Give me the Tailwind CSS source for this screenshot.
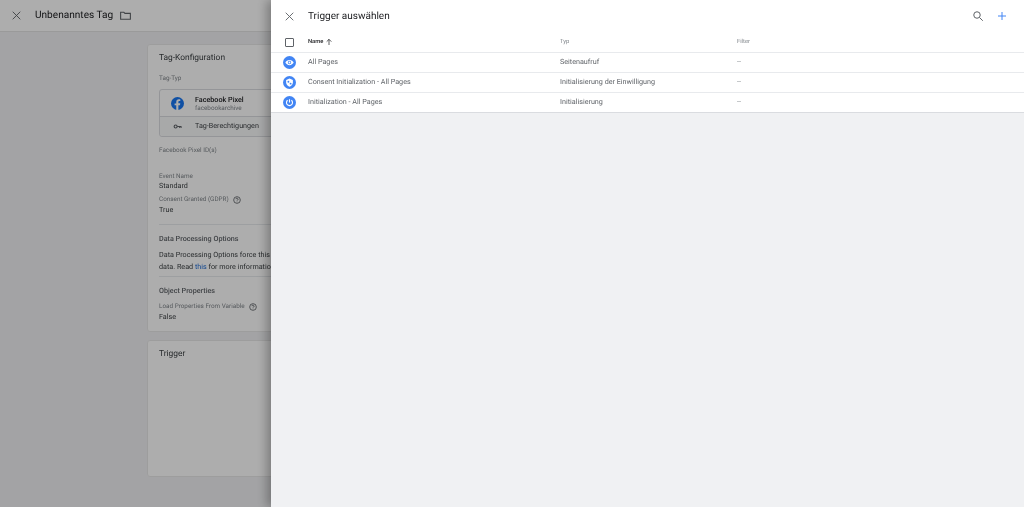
<!DOCTYPE html>
<html>
<head>
<meta charset="utf-8">
<title>Trigger auswählen</title>
<script src="https://cdn.jsdelivr.net/npm/@tailwindcss/browser@4"></script>
</head>
<body class="font-['Roboto',sans-serif] [text-rendering:geometricPrecision] bg-[#f0f1f3] text-[#3c4043] overflow-hidden">
<div class="relative w-[1024px] h-[507px] overflow-hidden blur-[0.35px] [will-change:transform]">

  <!-- page under the panel -->
  <div class="h-full flex flex-col">
    <header class="h-[32px] shrink-0 bg-white border-b border-[#e3e3e3] flex items-center">
      <svg class="w-[13px] h-[13px] ml-[10px] text-[#5f6368]" viewBox="0 0 24 24" fill="none" stroke="currentColor" stroke-width="1.700"><path d="M5 5l14 14M19 5L5 19"/></svg>
      <h1 class="ml-[12px] pt-[1px] text-[10.100px] leading-[14px] text-[#202124]">Unbenanntes Tag</h1>
      <svg class="w-[13px] h-[13px] ml-[6px] text-[#5f6368]" viewBox="0 0 24 24" fill="none" stroke="currentColor" stroke-width="2"><path d="M3 6h6l2 2h10v11H3z"/></svg>
    </header>
    <main class="flex-1 pl-[147px] pt-[12px] w-[560px]">
      <section class="h-[288px] bg-white rounded-[3px] border border-[#e8e8e8] pl-[11px] pt-[7px] flex flex-col">
        <h2 class="text-[8.400px] leading-[12px]">Tag-Konfiguration</h2>
        <p class="mt-[10px] text-[6.350px] leading-[9px] text-[#80868b]">Tag-Typ</p>
        <div class="mt-[6px] mr-[10px] h-[48px] border border-[#dadce0] rounded-[3px] flex flex-col">
          <div class="h-[27px] border-b border-[#dadce0] flex items-center">
            <svg class="w-[13px] h-[13px] ml-[11px]" viewBox="0 0 24 24"><circle cx="12" cy="12" r="12" fill="#1877f2"/><path fill="#fff" d="M13.600 24v-9h3l.5-3.500h-3.500V9.300c0-1 .5-1.900 2-1.900h1.600V4.400s-1.400-.3-2.800-.3c-2.800 0-4.700 1.700-4.700 4.900v2.900H6.600V15h3.100v9z"/></svg>
            <div class="ml-[11px]">
              <div class="text-[7.200px] leading-[9px] font-medium text-[#202124]">Facebook Pixel</div>
              <div class="text-[6.350px] leading-[8px] text-[#80868b]">facebookarchive</div>
            </div>
          </div>
          <div class="flex-1 bg-[#f8f9fa] flex items-center rounded-b-[3px]">
            <svg class="w-[9px] h-[9px] ml-[13px] text-[#5f6368]" viewBox="0 0 24 24" fill="none" stroke="currentColor" stroke-width="3"><circle cx="7" cy="12" r="4"/><path d="M11 12h11M18 12v4M22 12v3"/></svg>
            <span class="ml-[13px] text-[7.200px]">Tag-Berechtigungen</span>
          </div>
        </div>
        <p class="mt-[9px] text-[6.350px] leading-[9px] text-[#80868b]">Facebook Pixel ID(s)</p>
        <p class="mt-[17px] text-[6.350px] leading-[9px] text-[#80868b]">Event Name</p>
        <p class="text-[7.200px] leading-[10px]">Standard</p>
        <p class="mt-[4px] flex items-center gap-[4px] text-[6.350px] leading-[9px] text-[#80868b]">Consent Granted (GDPR)
          <svg class="w-[8px] h-[8px] text-[#5f6368]" viewBox="0 0 24 24" fill="none" stroke="currentColor" stroke-width="2.500"><circle cx="12" cy="12" r="10"/><path d="M9 9.500a3 3 0 1 1 4.500 2.600c-1 .6-1.500 1.200-1.500 2.400M12 17v1.500"/></svg>
        </p>
        <p class="text-[7.200px] leading-[11px]">True</p>
        <div class="mt-[9px] border-t border-[#e8eaed] pt-[8px]">
          <h3 class="text-[7.200px] leading-[11px] font-medium text-[#5f6368]">Data Processing Options</h3>
          <p class="mt-[5px] text-[7.200px] leading-[12px] whitespace-nowrap">Data Processing Options force this tag to limit the use of your</p>
          <p class="text-[7.200px] leading-[12px] whitespace-nowrap">data. Read <span class="text-[#1967d2]">this</span> for more information on this feature.</p>
        </div>
        <div class="mt-[3px] border-t border-[#e8eaed] pt-[8px]">
          <h3 class="text-[7.200px] leading-[11px] font-medium text-[#5f6368]">Object Properties</h3>
          <p class="mt-[6px] flex items-center gap-[4px] text-[6.350px] leading-[9px] text-[#80868b]">Load Properties From Variable
            <svg class="w-[8px] h-[8px] text-[#5f6368]" viewBox="0 0 24 24" fill="none" stroke="currentColor" stroke-width="2.500"><circle cx="12" cy="12" r="10"/><path d="M9 9.500a3 3 0 1 1 4.500 2.600c-1 .6-1.500 1.200-1.500 2.400M12 17v1.500"/></svg>
          </p>
          <p class="text-[7.200px] leading-[11px]">False</p>
        </div>
      </section>
      <section class="mt-[8px] h-[137px] bg-white rounded-[3px] border border-[#e8e8e8] pl-[11px] pt-[7px]">
        <h2 class="text-[8.400px] leading-[12px]">Trigger</h2>
      </section>
    </main>
  </div>

  <!-- scrim -->
  <div class="absolute inset-0 bg-black/32"></div>

  <!-- trigger panel -->
  <aside class="absolute top-0 bottom-0 left-[271px] right-0 bg-[#f0f1f3] shadow-[-4px_0_10px_rgba(0,0,0,0.3)] flex flex-col">
    <div class="h-[32px] shrink-0 bg-white flex items-center">
      <svg class="w-[13px] h-[13px] ml-[12px] text-[#5f6368]" viewBox="0 0 24 24" fill="none" stroke="currentColor" stroke-width="1.700"><path d="M5 5l14 14M19 5L5 19"/></svg>
      <h2 class="ml-[12px] pt-[1px] text-[10px] leading-[14px] text-[#202124]">Trigger auswählen</h2>
      <svg class="w-[12px] h-[12px] ml-auto -mt-[1px] text-[#5f6368]" viewBox="0 0 24 24" fill="none" stroke="currentColor" stroke-width="2"><circle cx="10" cy="10" r="6.500"/><path d="M15 15l6.500 6.500"/></svg>
      <svg class="w-[12px] h-[12px] ml-[12px] mr-[16px] text-[#4285f4]" viewBox="0 0 24 24" fill="none" stroke="currentColor" stroke-width="2"><path d="M12 4v16M4 12h16"/></svg>
    </div>

    <table class="w-full bg-white border-collapse">
      <thead>
        <tr class="h-[20px] border-b border-[#e8eaed] text-[5.800px] text-left">
          <th class="w-[37px] font-normal">
            <div class="ml-[14px] mt-[1px] w-[9px] h-[9px] border-[1.500px] border-[#5f6368] rounded-[1px]"></div>
          </th>
          <th class="w-[252px] font-medium text-[#202124] pt-[2px]">
            <span class="inline-flex items-center gap-[2px]">Name
              <svg class="w-[8px] h-[8px] -mt-[1px]" viewBox="0 0 24 24" fill="none" stroke="currentColor" stroke-width="2.200"><path d="M12 21V4M5 11l7-7 7 7"/></svg>
            </span>
          </th>
          <th class="w-[177px] font-normal text-[#80868b] pt-[2px]">Typ</th>
          <th class="font-normal text-[#80868b] pt-[2px]">Filter</th>
        </tr>
      </thead>
      <tbody class="text-[7.200px] text-[#5f6368]">
        <tr class="h-[20px] border-b border-[#e8eaed]">
          <td>
            <div class="ml-[12px] w-[13px] h-[13px] rounded-full bg-[#4285f4] flex items-center justify-center">
              <svg class="w-[9px] h-[9px]" viewBox="0 0 24 24"><path fill="#fff" d="M12 5C7 5 2.700 8.100 1 12c1.700 3.900 6 7 11 7s9.300-3.100 11-7c-1.700-3.900-6-7-11-7zm0 11.500a4.500 4.500 0 1 1 0-9 4.500 4.500 0 0 1 0 9zm0-7a2.500 2.500 0 1 0 0 5 2.500 2.500 0 0 0 0-5z"/></svg>
            </div>
          </td>
          <td>All Pages</td>
          <td>Seitenaufruf</td>
          <td class="text-[#80868b]">--</td>
        </tr>
        <tr class="h-[20px] border-b border-[#e8eaed]">
          <td>
            <div class="ml-[12px] w-[13px] h-[13px] rounded-full bg-[#4285f4] flex items-center justify-center">
              <svg class="w-[9px] h-[9px]" viewBox="0 0 24 24"><path fill="#fff" d="M12 1l9 4v6c0 5.500-3.800 10.500-9 12-5.200-1.500-9-6.500-9-12V5z"/><circle cx="9" cy="10" r="2.500" fill="#4285f4"/><circle cx="15" cy="15" r="2.500" fill="#4285f4"/></svg>
            </div>
          </td>
          <td>Consent Initialization - All Pages</td>
          <td>Initialisierung der Einwilligung</td>
          <td class="text-[#80868b]">--</td>
        </tr>
        <tr class="h-[20px] border-b border-[#dadce0]">
          <td>
            <div class="ml-[12px] w-[13px] h-[13px] rounded-full bg-[#4285f4] flex items-center justify-center">
              <svg class="w-[9px] h-[9px]" viewBox="0 0 24 24" fill="none" stroke="#fff" stroke-width="3"><path d="M12 3v9M7 6a8 8 0 1 0 10 0"/></svg>
            </div>
          </td>
          <td>Initialization - All Pages</td>
          <td>Initialisierung</td>
          <td class="text-[#80868b]">--</td>
        </tr>
      </tbody>
    </table>
  </aside>
</div>
</body>
</html>
